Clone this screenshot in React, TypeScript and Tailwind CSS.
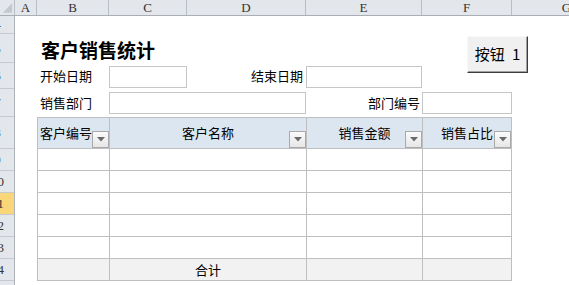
import React from "react";

const cjk = { fontFamily: '"Noto Sans CJK SC", "Noto Sans", sans-serif' };
const serif = { fontFamily: '"Liberation Serif", "DejaVu Serif", serif' };

const columns = [
  { name: "A", w: "w-[22px]" },
  { name: "B", w: "w-[72px]" },
  { name: "C", w: "w-[78px]" },
  { name: "D", w: "w-[119px]" },
  { name: "E", w: "w-[116px]" },
  { name: "F", w: "w-[90px]" },
  { name: "G", w: "w-[110px]" },
];

const rows = [
  { n: 4, h: "h-[18px]" },
  { n: 5, h: "h-[29px]" },
  { n: 6, h: "h-[26px]" },
  { n: 7, h: "h-[28px]" },
  { n: 8, h: "h-[32px]" },
  { n: 9, h: "h-[22px]" },
  { n: 10, h: "h-[22px]" },
  { n: 11, h: "h-[22px]", active: true },
  { n: 12, h: "h-[22px]" },
  { n: 13, h: "h-[22px]" },
  { n: 14, h: "h-[22px]" },
  { n: 15, h: "h-[22px]" },
];

function ColumnHeader() {
  return (
    <div className="flex h-[16px] shrink-0 border-b border-[#a9aeb4] bg-[#e3e6ea]" style={serif}>
      {/* select-all corner */}
      <div className="flex w-[15px] shrink-0 items-end justify-end border-r border-[#b9bec4]">
        <svg width="15" height="15" viewBox="0 0 15 15">
          <polygon points="3,13 13,13 13,3" fill="#c4c8cd" />
        </svg>
      </div>
      {columns.map((c) => (
        <div
          key={c.name}
          className={`${c.w} flex shrink-0 items-center justify-center border-r border-[#b9bec4] text-[13px] leading-none text-[#333]`}
        >
          {c.name}
        </div>
      ))}
    </div>
  );
}

function RowHeader() {
  return (
    <div className="flex w-[15px] shrink-0 flex-col overflow-hidden border-r border-[#aeb3b9] bg-[#e3e6ea]" style={serif}>
      {rows.map((r) => (
        <div
          key={r.n}
          className={`${r.h} flex shrink-0 items-center overflow-hidden border-b border-[#c6cacf] ${
            r.active ? "bg-[#f9d677]" : ""
          }`}
        >
          <div className="ml-[-16px] w-[27px] shrink-0 text-center text-[13px] leading-none text-[#333]">{r.n}</div>
        </div>
      ))}
    </div>
  );
}

function Dropdown() {
  return (
    <div className="absolute bottom-0 right-0 flex h-[17px] w-[17px] items-center justify-center border border-[#a9a9a9] bg-gradient-to-b from-[#fbfbfb] to-[#e6e6e6]">
      <svg width="8" height="5" viewBox="0 0 8 5">
        <polygon points="0,0 8,0 4,4.5" fill="#6a6a6a" />
      </svg>
    </div>
  );
}

function HeadCell({ label, span, align = "center", last }: { label: string; span?: boolean; align?: "left" | "center"; last?: boolean }) {
  return (
    <div
      className={`relative flex items-center border-y border-l border-[#bfbfbf] bg-[#dce6f1] text-[13px] text-black ${
        span ? "col-span-2" : ""
      } ${align === "left" ? "justify-start pl-[2px]" : "justify-center"} ${last ? "border-r" : ""}`}
    >
      <span>{label}</span>
      <Dropdown />
    </div>
  );
}

function BodyRow({ total }: { total?: boolean }) {
  const bg = total ? "bg-[#f2f2f2]" : "bg-white";
  return (
    <>
      <div />
      <div className={`border-b border-l border-[#bfbfbf] ${bg}`} />
      <div className={`col-span-2 flex items-center justify-center border-b border-l border-[#bfbfbf] text-[13px] ${bg}`}>
        {total ? "合计" : ""}
      </div>
      <div className={`border-b border-l border-[#bfbfbf] ${bg}`} />
      <div className={`border-b border-l border-r border-[#bfbfbf] ${bg}`} />
      <div />
    </>
  );
}

function Sheet() {
  return (
    <div className="relative flex-1" style={cjk}>
      <div className="grid grid-cols-[22px_72px_78px_119px_116px_90px_110px] grid-rows-[18px_29px_26px_28px_32px_22px_22px_22px_22px_22px_22px] text-black">
        {/* row 4 */}
        <div className="col-span-7" />

        {/* title */}
        <div />
        <div className="col-span-3 flex items-center pl-[4px] pt-[2px] text-[19px] font-bold leading-none">客户销售统计</div>
        <div className="col-span-3" />

        {/* dates */}
        <div />
        <div className="flex items-center pl-[3px] text-[13px]">开始日期</div>
        <div className="mt-[3px] h-[22px] border border-[#c6c6c6]" />
        <div className="flex items-center justify-end pr-[3px] text-[13px]">结束日期</div>
        <div className="mt-[3px] h-[22px] border border-[#c6c6c6]" />
        <div />
        <div />

        {/* department */}
        <div />
        <div className="flex items-center pl-[3px] text-[13px]">销售部门</div>
        <div className="col-span-2 mt-[3px] h-[22px] border border-[#c6c6c6]" />
        <div className="flex items-center justify-end pr-[2px] text-[13px]">部门编号</div>
        <div className="mt-[3px] h-[22px] border border-[#c6c6c6]" />
        <div />

        {/* table header */}
        <div />
        <HeadCell label="客户编号" align="left" />
        <HeadCell label="客户名称" span />
        <HeadCell label="销售金额" />
        <HeadCell label="销售占比" last />
        <div />

        <BodyRow />
        <BodyRow />
        <BodyRow />
        <BodyRow />
        <BodyRow />
        <BodyRow total />
      </div>

      {/* form button floats over the sheet */}
      <button className="absolute left-[452px] top-[20px] flex h-[37px] w-[61px] items-center justify-center border border-b-[#3c3c3c] border-l-[#f8f8f8] border-r-[#3c3c3c] border-t-[#f8f8f8] bg-[#f0f0f0] text-[15px] text-black shadow-[inset_-1px_-1px_0_#a0a0a0] [word-spacing:4px]">
        按钮 1
      </button>
    </div>
  );
}

export default function App() {
  return (
    <div className="flex h-[285px] w-[569px] flex-col overflow-hidden bg-white">
      <ColumnHeader />
      <div className="flex flex-1 overflow-hidden">
        <RowHeader />
        <Sheet />
      </div>
    </div>
  );
}
